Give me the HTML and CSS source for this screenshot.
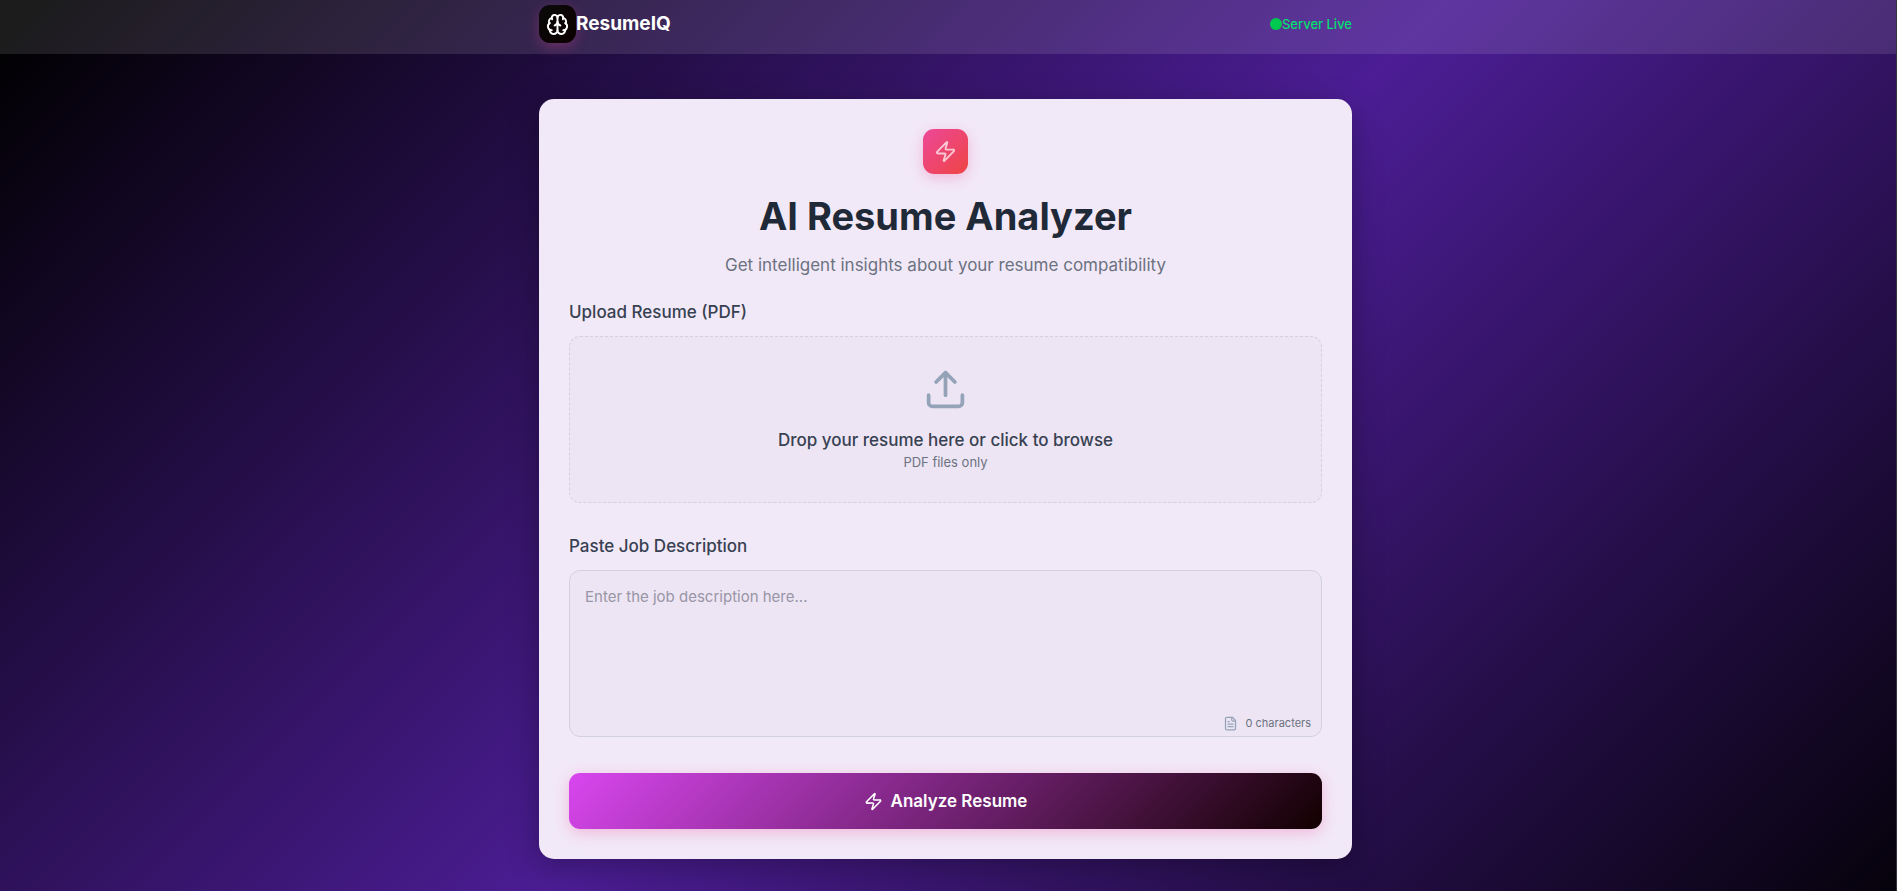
FILE: index.html
```html
<!DOCTYPE html>
<html lang="en">
<head>
<meta charset="utf-8">
<meta name="viewport" content="width=device-width, initial-scale=1">
<title>ResumeIQ</title>
<link rel="stylesheet" href="styles.css">
</head>
<body>
<header class="topbar">
  <div class="container topbar-inner">
    <div class="brand">
      <span class="brand-logo">
        <svg class="icon" viewBox="0 0 24 24" aria-hidden="true"><path d="M12 18V5"/><path d="M15 13a4.17 4.17 0 0 1-3-4 4.17 4.17 0 0 1-3 4"/><path d="M17.598 6.5A3 3 0 1 0 12 5a3 3 0 1 0-5.598 1.5"/><path d="M17.997 5.125a4 4 0 0 1 2.526 5.77"/><path d="M18 18a4 4 0 0 0 2-7.464"/><path d="M19.967 17.483A4 4 0 1 1 12 18a4 4 0 1 1-7.967-.517"/><path d="M6 18a4 4 0 0 1-2-7.464"/><path d="M6.003 5.125a4 4 0 0 0-2.526 5.77"/></svg>
      </span>
      <span class="brand-name">ResumeIQ</span>
    </div>
    <div class="status"><span class="status-dot"></span>Server Live</div>
  </div>
</header>
<main class="page">
  <form class="container card">
    <div class="hero">
      <span class="hero-badge">
        <svg class="icon" viewBox="0 0 24 24" aria-hidden="true"><path d="M4 14a1 1 0 0 1-.78-1.63l9.9-10.2a.5.5 0 0 1 .86.46l-1.92 6.02A1 1 0 0 0 13 10h7a1 1 0 0 1 .78 1.63l-9.9 10.2a.5.5 0 0 1-.86-.46l1.92-6.02A1 1 0 0 0 11 14z"/></svg>
      </span>
      <h1 class="title">AI Resume Analyzer</h1>
      <p class="subtitle">Get intelligent insights about your resume compatibility</p>
    </div>
    <label class="field-label" for="resume">Upload Resume (PDF)</label>
    <label class="dropzone" for="resume">
      <input class="file-input" id="resume" type="file" accept="application/pdf">
      <svg class="icon icon-upload" viewBox="0 0 24 24" aria-hidden="true"><path d="M12 3v12"/><path d="m17 8-5-5-5 5"/><path d="M21 15v4a2 2 0 0 1-2 2H5a2 2 0 0 1-2-2v-4"/></svg>
      <span class="drop-title">Drop your resume here or click to browse</span>
      <span class="drop-hint">PDF files only</span>
    </label>
    <label class="field-label" for="job">Paste Job Description</label>
    <div class="textarea-wrap">
      <textarea class="job-input" id="job" placeholder="Enter the job description here..."></textarea>
      <span class="counter">
        <svg class="icon icon-file" viewBox="0 0 24 24" aria-hidden="true"><path d="M15 2H6a2 2 0 0 0-2 2v16a2 2 0 0 0 2 2h12a2 2 0 0 0 2-2V7Z"/><path d="M14 2v4a2 2 0 0 0 2 2h4"/><path d="M10 9H8"/><path d="M16 13H8"/><path d="M16 17H8"/></svg>
        0 characters
      </span>
    </div>
    <button class="submit" type="button">
      <svg class="icon icon-zap" viewBox="0 0 24 24" aria-hidden="true"><path d="M4 14a1 1 0 0 1-.78-1.63l9.9-10.2a.5.5 0 0 1 .86.46l-1.92 6.02A1 1 0 0 0 13 10h7a1 1 0 0 1 .78 1.63l-9.9 10.2a.5.5 0 0 1-.86-.46l1.92-6.02A1 1 0 0 0 11 14z"/></svg>
      Analyze Resume
    </button>
  </form>
</main>
</body>
</html>
```
FILE: styles.css
```css
* {
  box-sizing: border-box;
}

body {
  margin: 0;
  min-height: 100vh;
  border-right: 1px solid #35323f;
  background: linear-gradient(135deg, #000 1%, #4c1d95 52%, #000 104%);
  font-family: Inter, "Liberation Sans", sans-serif;
  color: #374151;
}

.icon {
  display: block;
  width: 23px;
  height: 23px;
  fill: none;
  stroke: currentColor;
  stroke-width: 2;
  stroke-linecap: round;
  stroke-linejoin: round;
}

.container {
  width: 100%;
  max-width: 813px;
  margin: 0 auto;
}

.topbar {
  padding: 5px 5px 11px 0;
  background: rgba(255, 255, 255, 0.11);
}

.topbar-inner,
.brand,
.status {
  display: flex;
  align-items: center;
}

.topbar-inner {
  justify-content: space-between;
}

.brand-logo {
  display: grid;
  place-items: center;
  width: 37px;
  height: 38px;
  border-radius: 11px;
  background: linear-gradient(135deg, #0a0a0a, #0d0000);
  box-shadow: 0 4px 14px rgba(236, 72, 153, 0.3);
  color: #fff;
}

.brand-name {
  font-size: 19px;
  font-weight: 700;
  line-height: 28px;
  color: #fff;
}

.status {
  font-size: 13px;
  font-weight: 500;
  line-height: 20px;
  color: #05df72;
}

.status-dot {
  width: 12px;
  height: 12px;
  border-radius: 50%;
  background: #00c950;
}

.page {
  padding: 45px 5px 30px 0;
}

.card {
  padding: 30px;
  border-radius: 15px;
  background: #f2e9f8;
  box-shadow: 0 8px 32px rgba(0, 0, 0, 0.3);
}

.hero {
  display: flex;
  flex-direction: column;
  align-items: center;
  text-align: center;
}

.hero-badge {
  display: grid;
  place-items: center;
  width: 45px;
  height: 45px;
  border-radius: 11px;
  background: linear-gradient(135deg, #ec4899, #ef4444);
  box-shadow: 0 4px 14px rgba(236, 72, 153, 0.3);
  color: rgba(255, 255, 255, 0.7);
}

.title {
  margin: 18px 0 13px;
  font-size: 38px;
  font-weight: 700;
  line-height: 48px;
  color: #1f2937;
}

.subtitle {
  margin: 0 0 23px;
  font-size: 17px;
  line-height: 24px;
  color: #6b7280;
}

.field-label {
  display: block;
  margin-bottom: 11px;
  font-size: 17px;
  font-weight: 500;
  line-height: 25px;
}

.dropzone {
  display: flex;
  flex-direction: column;
  align-items: center;
  margin-bottom: 31px;
  padding: 30px;
  border: 1px dashed #d5cfe0;
  border-radius: 11px;
  background: #ede5f4;
  cursor: pointer;
}

.file-input {
  position: absolute;
  width: 1px;
  height: 1px;
  opacity: 0;
}

.icon-upload {
  width: 45px;
  height: 45px;
  margin-bottom: 16px;
  color: #94a3b8;
}

.drop-title {
  font-size: 17px;
  font-weight: 500;
  line-height: 24px;
}

.drop-hint {
  font-size: 13px;
  line-height: 20px;
  color: #6b7280;
}

.textarea-wrap {
  position: relative;
  margin-bottom: 36px;
}

.job-input {
  display: block;
  width: 100%;
  height: 167px;
  padding: 14px 15px;
  border: 1px solid #d3d1e0;
  border-radius: 11px;
  background: #ede5f4;
  font-family: inherit;
  font-size: 15px;
  line-height: 23px;
  color: #374151;
  resize: none;
}

.job-input::placeholder {
  color: #9895a5;
}

.counter {
  position: absolute;
  right: 11px;
  bottom: 6px;
  display: flex;
  align-items: center;
  gap: 8px;
  font-size: 11px;
  line-height: 16px;
  color: #6b7280;
}

.icon-file {
  width: 15px;
  height: 15px;
  color: #94a3b8;
}

.submit {
  display: flex;
  align-items: center;
  justify-content: center;
  gap: 8px;
  width: 100%;
  padding: 16px;
  border: 0;
  border-radius: 11px;
  background: linear-gradient(135deg, #d946ef, #120000);
  box-shadow: 0 4px 15px rgba(236, 72, 153, 0.3);
  font-family: inherit;
  font-size: 17px;
  font-weight: 600;
  line-height: 24px;
  color: #fff;
}

.icon-zap {
  width: 19px;
  height: 19px;
}
```
